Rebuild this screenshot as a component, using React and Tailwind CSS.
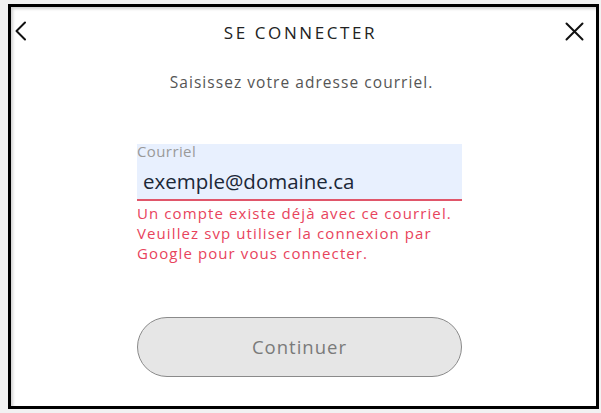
import { useState } from "react";

const font = { fontFamily: '"Open Sans", "Noto Sans", sans-serif' };

const BackIcon = () => (
  <svg width="14" height="20" viewBox="0 0 14 20" fill="none">
    <path d="M11 1.5L2.5 10L11 18.5" stroke="#111" strokeWidth="2" strokeLinecap="round" strokeLinejoin="round" />
  </svg>
);

const CloseIcon = () => (
  <svg width="19" height="19" viewBox="0 0 19 19" fill="none">
    <path d="M1.5 1.5L17.5 17.5M17.5 1.5L1.5 17.5" stroke="#111" strokeWidth="2" strokeLinecap="round" />
  </svg>
);

const App = () => {
  const [email, setEmail] = useState("exemple@domaine.ca");

  return (
    <div className="w-[601px] h-[413px] bg-[#f2f2f2] pt-[4px] pl-[8px]" style={font}>
      <div className="w-[591px] h-[405px] border-[3px] border-black bg-white shadow-[inset_2px_2px_3px_rgba(0,0,0,0.18)]">
        {/* Header */}
        <div className="h-[48px] flex items-center justify-between pl-[3px] pr-[12px]">
          <button className="w-[16px] flex items-center">
            <BackIcon />
          </button>
          <h1 className="text-[17px] tracking-[2.6px] text-[#222] mt-[4px] ml-[6px]">SE CONNECTER</h1>
          <button className="flex items-center">
            <CloseIcon />
          </button>
        </div>

        {/* Subtitle */}
        <p className="mt-[17px] text-center text-[15.5px] tracking-[1.05px] text-[#555] leading-[20px] pr-[4px]">
          Saisissez votre adresse courriel.
        </p>

        {/* Form */}
        <div className="w-[325px] ml-[126px] mt-[52px]">
          <label className="block bg-[#e8f0fe] h-[57px] border-b-2 border-[#e0566a]">
            <span className="block text-[15px] leading-[15px] text-[#9a9a9a] tracking-[0.4px]">Courriel</span>
            <input
              type="email"
              value={email}
              onChange={(e) => setEmail(e.target.value)}
              className="w-full bg-transparent outline-none pl-[6px] mt-[9px] text-[20.5px] leading-[26px] font-medium text-[#1c2838]"
              style={font}
            />
          </label>
          <p className="mt-[2px] text-[15px] leading-[20px] tracking-[1.1px] text-[#e8435c] whitespace-nowrap">
            Un compte existe déjà avec ce courriel.
            <br />
            Veuillez svp utiliser la connexion par
            <br />
            Google pour vous connecter.
          </p>

          <button
            type="button"
            className="mt-[54px] w-full h-[60px] rounded-full bg-[#e6e6e6] border border-[#8a8a8a] text-[18.5px] tracking-[1px] text-[#7a7a7a]"
            style={font}
          >
            Continuer
          </button>
        </div>
      </div>
    </div>
  );
};

export default App;
